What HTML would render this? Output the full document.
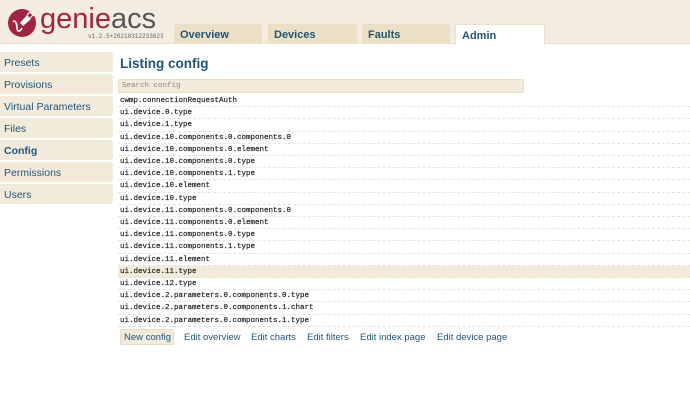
<!DOCTYPE html>
<html><head><style>
*{margin:0;padding:0;box-sizing:border-box}
body{width:690px;height:415px;background:#fff;font-family:"Liberation Sans",sans-serif;position:relative;overflow:hidden}
.hdr{position:absolute;left:0;top:0;width:690px;height:44px;background:#f3ece0;border-bottom:1px solid #ebe0c8}
.tab{position:absolute;top:24px;height:20px;background:#ebe0c6;border-radius:3px 3px 0 0;color:#1f5577;font-weight:bold;font-size:11px;padding:5px 0 0 6px}
.tab.act{background:#fff;border:1px solid #ebe0c8;border-bottom:none;height:21px}
.side{position:absolute;left:0;width:113px;height:20px;background:#f2ebdb;border-radius:0 3px 3px 0;color:#1f5577;font-size:10.5px;padding:5px 0 0 4px}
h1{position:absolute;left:120px;top:56px;font-size:13.5px;color:#1f5577;font-weight:bold}
.search{position:absolute;left:118px;top:79px;width:406px;height:14px;background:#f2ebdb;border:1px solid #e8dcc2;border-radius:2px;font-family:"Liberation Mono",monospace;font-size:7.5px;color:#888;padding:2px 3px}
.row{position:absolute;left:118px;width:572px;height:12.2px;border-bottom:1px dashed #ece4d2;font-family:"Liberation Mono",monospace;font-size:7.5px;color:#222;padding:2px 0 0 2px;line-height:9px;-webkit-text-stroke:0.2px #222}
.row.hl{background:#f2ebdb}
.btns{position:absolute;top:330px;left:120px;font-size:9.5px;color:#1f5577}
.btns span{position:absolute;top:0;white-space:nowrap}
</style></head><body>
<div class="hdr">
<svg style="position:absolute;left:7px;top:8px" width="30" height="30" viewBox="0 0 30 30"><circle cx="15" cy="15" r="14" fill="#a32442"/><path d="M6 14c2-3 4 2 4 6s3 4 5 0" stroke="#fff" stroke-width="1.6" fill="none"/><path d="M13 15l7-8 4 4-8 7z" fill="#fff"/><path d="M20 7l3-3 3 3-3 3" stroke="#fff" stroke-width="1.2" fill="none"/></svg>
<div style="position:absolute;left:40px;top:3px;font-size:29px;line-height:32px"><span style="color:#a32442">genie</span><span style="color:#555">acs</span></div>
<div style="position:absolute;left:88px;top:33px;font-family:'Liberation Mono',monospace;font-size:6px;color:#666">v1.2.5+20210312233623</div>
<div class="tab" style="left:174px;width:88px">Overview</div>
<div class="tab" style="left:268px;width:89px">Devices</div>
<div class="tab" style="left:362px;width:88px">Faults</div>
<div class="tab act" style="left:455px;width:90px">Admin</div>
</div>
<div class="side" style="top:52px">Presets</div>
<div class="side" style="top:74px">Provisions</div>
<div class="side" style="top:96px">Virtual Parameters</div>
<div class="side" style="top:118px">Files</div>
<div class="side" style="top:140px;font-weight:bold">Config</div>
<div class="side" style="top:162px">Permissions</div>
<div class="side" style="top:184px">Users</div>
<h1>Listing config</h1>
<div class="search">Search config</div>
<div class="row" style="top:95px">cwmp.connectionRequestAuth</div>
<div class="row" style="top:107.2px">ui.device.0.type</div>
<div class="row" style="top:119.4px">ui.device.1.type</div>
<div class="row" style="top:131.6px">ui.device.10.components.0.components.0</div>
<div class="row" style="top:143.8px">ui.device.10.components.0.element</div>
<div class="row" style="top:156px">ui.device.10.components.0.type</div>
<div class="row" style="top:168.2px">ui.device.10.components.1.type</div>
<div class="row" style="top:180.4px">ui.device.10.element</div>
<div class="row" style="top:192.6px">ui.device.10.type</div>
<div class="row" style="top:204.8px">ui.device.11.components.0.components.0</div>
<div class="row" style="top:217px">ui.device.11.components.0.element</div>
<div class="row" style="top:229.2px">ui.device.11.components.0.type</div>
<div class="row" style="top:241.4px">ui.device.11.components.1.type</div>
<div class="row" style="top:253.6px">ui.device.11.element</div>
<div class="row hl" style="top:265.8px">ui.device.11.type</div>
<div class="row" style="top:278px">ui.device.12.type</div>
<div class="row" style="top:290.2px">ui.device.2.parameters.0.components.0.type</div>
<div class="row" style="top:302.4px">ui.device.2.parameters.0.components.1.chart</div>
<div class="row" style="top:314.6px">ui.device.2.parameters.0.components.1.type</div>
<div style="position:absolute;left:120px;top:329px;width:54px;height:16px;background:#f2ebdb;border:1px solid #e8dcc2;border-radius:2px"></div>
<div class="btns">
<span style="left:4px;top:2px">New config</span>
<span style="left:64px;top:2px">Edit overview</span>
<span style="left:131px;top:2px">Edit charts</span>
<span style="left:187px;top:2px">Edit filters</span>
<span style="left:240px;top:2px">Edit index page</span>
<span style="left:317px;top:2px">Edit device page</span>
</div>
</body></html>
